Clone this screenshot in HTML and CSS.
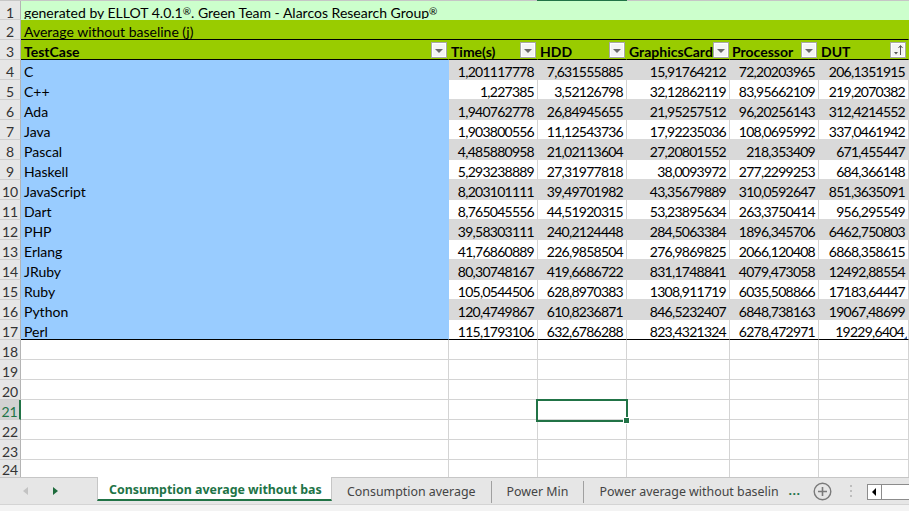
FILE: index.html
```html
<!DOCTYPE html>
<html>
<head>
<meta charset="utf-8">
<link rel="stylesheet" href="styles.css">
</head>
<body>
<div class="sheet">
  <div class="topstrip"><span class="colsel"></span></div>
  <div class="grid">
    <div class="rh">1</div><div class="c title">generated by ELLOT 4.0.1<span class="reg">®</span>. Green Team - Alarcos Research Group<span class="reg">®</span></div>
    <div class="rh">2</div><div class="c sub">Average without baseline (j)</div>
    <div class="rh">3</div>
    <div class="c hd">TestCase<span class="fb"><span class="tri"></span></span></div>
    <div class="c hd">Time(s)<span class="fb"><span class="tri"></span></span></div>
    <div class="c hd">HDD<span class="fb"><span class="tri"></span></span></div>
    <div class="c hd">GraphicsCard<span class="fb"><span class="tri"></span></span></div>
    <div class="c hd">Processor<span class="fb"><span class="tri"></span></span></div>
    <div class="c hd last">DUT<span class="fb"><svg width="10" height="12" viewBox="0 0 10 12"><path d="M1 8h4l-2 2.5z" fill="#555"/><path d="M7.5 11V2" stroke="#555" stroke-width="1"/><path d="M5.5 4l2-2.5 2 2.5" fill="none" stroke="#555" stroke-width="1"/></svg></span></div>

    <div class="rh">4</div><div class="c lang">C</div><div class="c n g">1,201117778</div><div class="c n g">7,631555885</div><div class="c n g">15,91764212</div><div class="c n g">72,20203965</div><div class="c n g">206,1351915</div>
    <div class="rh">5</div><div class="c lang">C++</div><div class="c n w">1,227385</div><div class="c n w">3,52126798</div><div class="c n w">32,12862119</div><div class="c n w">83,95662109</div><div class="c n w">219,2070382</div>
    <div class="rh">6</div><div class="c lang">Ada</div><div class="c n g">1,940762778</div><div class="c n g">26,84945655</div><div class="c n g">21,95257512</div><div class="c n g">96,20256143</div><div class="c n g">312,4214552</div>
    <div class="rh">7</div><div class="c lang">Java</div><div class="c n w">1,903800556</div><div class="c n w">11,12543736</div><div class="c n w">17,92235036</div><div class="c n w">108,0695992</div><div class="c n w">337,0461942</div>
    <div class="rh">8</div><div class="c lang">Pascal</div><div class="c n g">4,485880958</div><div class="c n g">21,02113604</div><div class="c n g">27,20801552</div><div class="c n g">218,353409</div><div class="c n g">671,455447</div>
    <div class="rh">9</div><div class="c lang">Haskell</div><div class="c n w">5,293238889</div><div class="c n w">27,31977818</div><div class="c n w">38,0093972</div><div class="c n w">277,2299253</div><div class="c n w">684,366148</div>
    <div class="rh">10</div><div class="c lang">JavaScript</div><div class="c n g">8,203101111</div><div class="c n g">39,49701982</div><div class="c n g">43,35679889</div><div class="c n g">310,0592647</div><div class="c n g">851,3635091</div>
    <div class="rh">11</div><div class="c lang">Dart</div><div class="c n w">8,765045556</div><div class="c n w">44,51920315</div><div class="c n w">53,23895634</div><div class="c n w">263,3750414</div><div class="c n w">956,295549</div>
    <div class="rh">12</div><div class="c lang">PHP</div><div class="c n g">39,58303111</div><div class="c n g">240,2124448</div><div class="c n g">284,5063384</div><div class="c n g">1896,345706</div><div class="c n g">6462,750803</div>
    <div class="rh">13</div><div class="c lang">Erlang</div><div class="c n w">41,76860889</div><div class="c n w">226,9858504</div><div class="c n w">276,9869825</div><div class="c n w">2066,120408</div><div class="c n w">6868,358615</div>
    <div class="rh">14</div><div class="c lang">JRuby</div><div class="c n g">80,30748167</div><div class="c n g">419,6686722</div><div class="c n g">831,1748841</div><div class="c n g">4079,473058</div><div class="c n g">12492,88554</div>
    <div class="rh">15</div><div class="c lang">Ruby</div><div class="c n w">105,0544506</div><div class="c n w">628,8970383</div><div class="c n w">1308,911719</div><div class="c n w">6035,508866</div><div class="c n w">17183,64447</div>
    <div class="rh">16</div><div class="c lang">Python</div><div class="c n g">120,4749867</div><div class="c n g">610,8236871</div><div class="c n g">846,5232407</div><div class="c n g">6848,738163</div><div class="c n g">19067,48699</div>
    <div class="rh">17</div><div class="c lang end">Perl</div><div class="c n w end">115,1793106</div><div class="c n w end">632,6786288</div><div class="c n w end">823,4321324</div><div class="c n w end">6278,472971</div><div class="c n w end corner">19229,6404</div>

    <div class="rh">18</div><div class="c"></div><div class="c"></div><div class="c"></div><div class="c"></div><div class="c"></div><div class="c"></div>
    <div class="rh">19</div><div class="c"></div><div class="c"></div><div class="c"></div><div class="c"></div><div class="c"></div><div class="c"></div>
    <div class="rh">20</div><div class="c"></div><div class="c"></div><div class="c"></div><div class="c"></div><div class="c"></div><div class="c"></div>
    <div class="rh sel">21</div><div class="c"></div><div class="c"></div><div class="c"></div><div class="c"></div><div class="c"></div><div class="c"></div>
    <div class="rh">22</div><div class="c"></div><div class="c"></div><div class="c"></div><div class="c"></div><div class="c"></div><div class="c"></div>
    <div class="rh">23</div><div class="c"></div><div class="c"></div><div class="c"></div><div class="c"></div><div class="c"></div><div class="c"></div>
    <div class="rh last-row">24</div><div class="c"></div><div class="c"></div><div class="c"></div><div class="c"></div><div class="c"></div><div class="c"></div>
  </div>
  <div class="selection"><span class="handle"></span></div>
</div>
<div class="tabbar">
  <div class="nav">
    <span class="arr left"></span>
    <span class="arr right"></span>
  </div>
  <div class="tab active">Consumption average without bas</div>
  <div class="tab">Consumption average</div>
  <span class="sep"></span>
  <div class="tab">Power Min</div>
  <span class="sep"></span>
  <div class="tab">Power average without baselin</div>
  <span class="more">...</span>
  <span class="add"><svg width="19" height="19" viewBox="0 0 19 19"><circle cx="9.5" cy="9.5" r="8.3" fill="none" stroke="#7a7a7a" stroke-width="1.4"/><path d="M9.5 5v9M5 9.5h9" stroke="#7a7a7a" stroke-width="1.6"/></svg></span>
  <span class="vdots"><i></i><i></i><i></i></span>
  <div class="hscroll"><span class="sbtn"><span class="ltri"></span></span></div>
</div>
<div class="status"></div>
</body>
</html>
```
FILE: styles.css
```css
html, body {
  margin: 0;
  padding: 0;
}
body {
  width: 909px;
  height: 511px;
  overflow: hidden;
  background: #f3f3f3;
  font-family: Lato, "Open Sans", sans-serif;
  font-size: 14px;
  color: #000;
}
.sheet {
  position: relative;
  height: 477px;
  overflow: hidden;
  background: #fff;
}
.topstrip {
  position: relative;
  height: 1px;
  background: #c6c6c6;
}
.colsel {
  position: absolute;
  left: 537px;
  width: 90px;
  top: 0;
  height: 1px;
  background: #217346;
}
.grid {
  display: grid;
  grid-template-columns: 21px 428px 89px 89px 103px 89px 90px;
  grid-template-rows: 19px;
  grid-auto-rows: 20px;
}
.c {
  box-sizing: border-box;
  border-right: 1px solid #d4d4d4;
  border-bottom: 1px solid #d4d4d4;
  line-height: 19px;
  padding: 2px 2px 0 2px;
  white-space: nowrap;
  overflow: hidden;
}
.rh {
  box-sizing: border-box;
  background: #e6e6e6;
  border-right: 1px solid #b4b4b4;
  border-bottom: 1px solid #cfcfcf;
  text-align: center;
  line-height: 19px;
  padding-top: 2px;
  overflow: hidden;
  color: #333;
  font-size: 14px;
}
.rh.last-row {
  padding-top: 0;
}
.rh.sel {
  background: #d2d2d2;
  color: #217346;
  border-right: 2px solid #217346;
}
.title {
  grid-column: span 6;
  background: #ccffcc;
  border-color: #ccffcc;
  padding-left: 3px;
  padding-top: 1px;
}
.reg {
  font-size: 10px;
  vertical-align: 3px;
}
.sub {
  grid-column: span 6;
  background: #99cc00;
  border-right-color: #99cc00;
  border-bottom: 1px solid #000;
  padding-left: 3px;
}
.hd {
  display: flex;
  align-items: flex-start;
  background: #99cc00;
  border-right-color: #99cc00;
  border-bottom: 1px solid #000;
  font-weight: bold;
  padding: 2px 1px 0 2px;
}
.hd:nth-child(6) {
  padding-left: 3px;
}
.fb {
  margin-left: auto;
  box-sizing: border-box;
  width: 16px;
  height: 16px;
  flex: none;
  background: #f4f4f4;
  border: 1px solid #a8a8a8;
  box-shadow: inset 0 0 0 1px #ffffff;
  display: flex;
  align-items: center;
  justify-content: center;
}
.hd.last {
  padding-right: 2px;
}
.tri {
  width: 0;
  height: 0;
  border-left: 4px solid transparent;
  border-right: 4px solid transparent;
  border-top: 4px solid #6b6b6b;
  margin-top: 1px;
}
.lang {
  background: #99ccff;
  border-color: #99ccff;
  padding-left: 3px;
}
.n {
  text-align: right;
  letter-spacing: -0.75px;
  padding-right: 3px;
}
.g {
  background: #d9d9d9;
  border-color: #d9d9d9;
}
.w {
  background: #fff;
  border-bottom-color: #d9d9d9;
}
.end {
  border-bottom: 1px solid #000;
}
.corner {
  position: relative;
  padding-right: 4px;
}
.corner::after {
  content: "";
  position: absolute;
  right: 1px;
  bottom: 0;
  width: 0;
  height: 0;
  border-left: 3px solid transparent;
  border-bottom: 3px solid #3b66ad;
}
.selection {
  position: absolute;
  left: 536px;
  top: 399px;
  width: 92px;
  height: 23px;
  box-sizing: border-box;
  border: 2px solid #217346;
}
.handle {
  position: absolute;
  right: -4px;
  bottom: -4px;
  width: 5px;
  height: 5px;
  background: #217346;
  border: 1px solid #fff;
}
.tabbar {
  box-sizing: border-box;
  height: 28px;
  background: #e6e6e6;
  border-top: 1px solid #c6c6c6;
  border-bottom: 1px solid #d4d4d4;
  display: flex;
  align-items: flex-start;
  font-family: "Noto Sans", "Open Sans", sans-serif;
  font-size: 12.4px;
  color: #444;
}
.nav {
  width: 97px;
  height: 26px;
  display: flex;
  align-items: center;
  flex: none;
}
.arr {
  width: 0;
  height: 0;
  border-top: 4px solid transparent;
  border-bottom: 4px solid transparent;
}
.arr.left {
  margin-left: 23px;
  border-right: 5px solid #c3c3c3;
}
.arr.right {
  margin-left: 25px;
  border-left: 5px solid #1e6b3c;
}
.tab {
  height: 26px;
  line-height: 27px;
  padding: 0 15px;
  white-space: nowrap;
  flex: none;
}
.tab.active {
  box-sizing: border-box;
  width: 235px;
  height: 24px;
  line-height: 25px;
  padding: 0 0 0 11px;
  background: #fff;
  border-bottom: 2px solid #217346;
  border-left: 1px solid #c6c6c6;
  border-right: 1px solid #c6c6c6;
  margin-top: -1px;
  color: #217346;
  font-weight: bold;
}
.sep {
  width: 1px;
  height: 22px;
  margin-top: 3px;
  background: #a0a0a0;
  flex: none;
}
.more {
  margin-left: -5px;
  line-height: 26px;
  color: #217346;
  font-weight: bold;
  letter-spacing: 0.5px;
}
.add {
  margin-left: 12px;
  margin-top: 4px;
  display: flex;
}
.vdots {
  margin-left: 18px;
  margin-top: 7px;
  display: flex;
  flex-direction: column;
  gap: 3px;
}
.vdots i {
  display: block;
  width: 2px;
  height: 2px;
  background: #bdbdbd;
}
.hscroll {
  margin-left: 15px;
  margin-top: 6px;
  box-sizing: border-box;
  height: 16px;
  flex: 1;
  background: #fff;
  border: 1px solid #8c8c8c;
  border-right: none;
  display: flex;
}
.sbtn {
  width: 14px;
  box-sizing: border-box;
  border-right: 1px solid #8c8c8c;
  display: flex;
  align-items: center;
  justify-content: center;
}
.ltri {
  width: 0;
  height: 0;
  border-top: 4px solid transparent;
  border-bottom: 4px solid transparent;
  border-right: 4px solid #000;
}
.status {
  height: 6px;
  background: #f3f3f3;
}
```
